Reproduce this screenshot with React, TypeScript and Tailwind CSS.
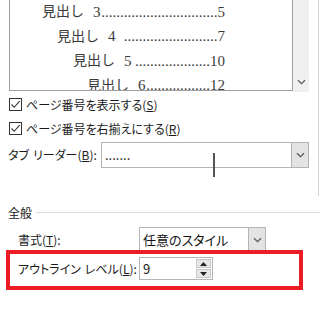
import React from "react"

const headings = [
  { label: "見出し", num: "3", page: "5", dots: 31, indent: "pl-[32px]" },
  { label: "見出し", num: "4 ", page: "7", dots: 25, indent: "pl-[47px]" },
  { label: "見出し", num: "5", page: "10", dots: 20, indent: "pl-[63px]" },
  { label: "見出し", num: "6", page: "12", dots: 17, indent: "pl-[77px]" },
]

function Chevron({ className = "" }: { className?: string }) {
  return (
    <svg width="9" height="6" viewBox="0 0 9 6" className={className}>
      <path d="M1 1.2 L4.5 4.6 L8 1.2" fill="none" stroke="#5a5a5a" strokeWidth="1.3" />
    </svg>
  )
}

function CheckBox() {
  return (
    <div className="w-[13px] h-[13px] border border-[#333] bg-white flex items-center justify-center shrink-0">
      <svg width="11" height="11" viewBox="0 0 11 11">
        <path d="M1.5 5.5 L4.2 8.3 L9.6 2.2" fill="none" stroke="#333" strokeWidth="1.1" />
      </svg>
    </div>
  )
}

function Combo({ text, w, h }: { text: string; w: string; h: string }) {
  return (
    <div className={`${w} ${h} border border-[#b4b4b4] bg-white flex items-stretch shrink-0`}>
      <div className="flex-1 pl-[3px] flex items-center text-[13px] text-[#111] whitespace-nowrap">{text}</div>
      <div className="w-[17px] bg-[#e3e3e3] border-l border-[#b4b4b4] flex items-center justify-center">
        <Chevron />
      </div>
    </div>
  )
}

export default function App() {
  return (
    <div
      className="w-[320px] h-[327px] bg-white relative overflow-hidden text-[12px] text-[#1a1a1a] whitespace-nowrap [font-feature-settings:'palt']"
      style={{ fontFamily: '"Noto Sans CJK JP", "Noto Sans", sans-serif' }}
    >
      {/* upper panel */}
      <div className="w-[319px] h-[196px] border-r border-[#d4d4d4]">
        <div className="flex pl-[9px]">
          <div className="w-[284px] h-[91px] border-l border-b border-r border-[#9e9e9e] overflow-hidden">
            {headings.map((h) => (
              <div
                key={h.page}
                className={`h-[24.5px] flex items-center pr-[67px] ${h.indent} text-[15px] text-[#3a3a3a] leading-none [font-feature-settings:normal]`}
                style={{ fontFamily: '"Liberation Serif", "Noto Sans CJK JP", serif' }}
              >
                <span className="text-[14px] mr-[9px]">{h.label}</span>
                <span className="whitespace-pre">{h.num}</span>
                <span className="flex-1 flex justify-end">{".".repeat(h.dots)}</span>
                <span>{h.page}</span>
              </div>
            ))}
          </div>
          <div className="w-[16px] h-[92px] bg-[#f0f0f0] flex items-end justify-center pb-[7px]">
            <Chevron />
          </div>
        </div>

        <div className="mt-[6px] pl-[9px] flex flex-col gap-[11px]">
          <div className="flex items-center gap-[4px] h-[13px]">
            <CheckBox />
            <span>
              ページ番号を表示する(<span className="underline">S</span>)
            </span>
          </div>
          <div className="flex items-center gap-[4px] h-[13px]">
            <CheckBox />
            <span>
              ページ番号を右揃えにする(<span className="underline">R</span>)
            </span>
          </div>
        </div>

        <div className="mt-[7px] pl-[8px] flex items-center">
          <span className="w-[93px]">
            タブ<span className="ml-[4px]">リーダー(<span className="underline">B</span>):</span>
          </span>
          <Combo text="......." w="w-[208px]" h="h-[26px]" />
        </div>
      </div>

      {/* mouse I-beam */}
      <div className="absolute left-[213px] top-[153px] w-[1.5px] h-[24px] bg-[#555]" />

      {/* general group */}
      <div className="mt-[8px] h-[17px] pl-[8px] flex items-center gap-[4px]">
        <span>全般</span>
        <div className="flex-1 h-px bg-[#dcdcdc]" />
      </div>

      <div className="mt-[6px] pl-[18px] flex items-center">
        <span className="w-[121px]">
          書式(<span className="underline">T</span>):
        </span>
        <Combo text="任意のスタイル" w="w-[127px]" h="h-[26px]" />
      </div>

      <div className="mt-[4px] pl-[18px] flex items-center">
        <span className="w-[121px]">
          アウトライン<span className="ml-[4px]">レベル(<span className="underline">L</span>):</span>
        </span>
        <div className="w-[74px] h-[23px] border border-[#b4b4b4] bg-white flex items-stretch shrink-0">
          <div className="flex-1 pl-[3px] flex items-center text-[13px]">9</div>
          <div className="w-[17px] flex flex-col p-[1px] gap-[1px]">
            <div className="flex-1 bg-[#e6e6e6] border border-[#c8c8c8] flex items-center justify-center">
              <svg width="7" height="4" viewBox="0 0 7 4">
                <path d="M3.5 0 L7 4 L0 4 Z" fill="#222" />
              </svg>
            </div>
            <div className="flex-1 bg-[#e6e6e6] border border-[#c8c8c8] flex items-center justify-center">
              <svg width="7" height="4" viewBox="0 0 7 4">
                <path d="M0 0 L7 0 L3.5 4 Z" fill="#222" />
              </svg>
            </div>
          </div>
        </div>
      </div>

      {/* highlight */}
      <div className="absolute left-[6px] top-[250px] w-[297px] h-[40px] border-[4px] border-[#ec1c24]" />
    </div>
  )
}
